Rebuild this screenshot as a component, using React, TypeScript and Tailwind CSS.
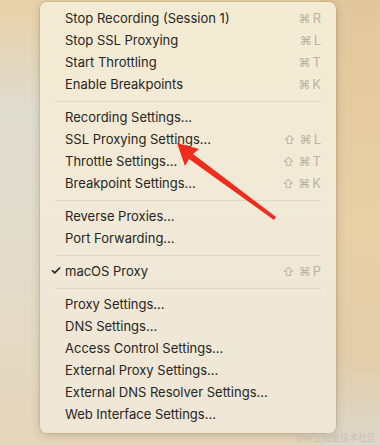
const groups: { label: string; shortcut?: string; checked?: boolean }[][] = [
  [
    { label: "Stop Recording (Session 1)", shortcut: "⌘R" },
    { label: "Stop SSL Proxying", shortcut: "⌘L" },
    { label: "Start Throttling", shortcut: "⌘T" },
    { label: "Enable Breakpoints", shortcut: "⌘K" },
  ],
  [
    { label: "Recording Settings..." },
    { label: "SSL Proxying Settings...", shortcut: "⇧⌘L" },
    { label: "Throttle Settings...", shortcut: "⇧⌘T" },
    { label: "Breakpoint Settings...", shortcut: "⇧⌘K" },
  ],
  [{ label: "Reverse Proxies..." }, { label: "Port Forwarding..." }],
  [{ label: "macOS Proxy", shortcut: "⇧⌘P", checked: true }],
  [
    { label: "Proxy Settings..." },
    { label: "DNS Settings..." },
    { label: "Access Control Settings..." },
    { label: "External Proxy Settings..." },
    { label: "External DNS Resolver Settings..." },
    { label: "Web Interface Settings..." },
  ],
];

const App = () => {
  return (
    <div className="relative w-[380px] h-[445px] overflow-hidden bg-[linear-gradient(180deg,#e9d2a8_0%,#dfdcd0_25%,#e3dccb_60%,#e6d6bb_100%)] font-['Inter','Liberation_Sans',sans-serif]">
      <div className="absolute right-0 top-0 h-full w-[60px] bg-[linear-gradient(180deg,#e3c79c_0%,#e8cfa6_50%,#e2cda9_80%,#ddd8cc_100%)]"></div>
      <div className="relative ml-[40px] mt-[2px] w-[296px] rounded-[7px] bg-[linear-gradient(180deg,#f4ebd3_0%,#f1e9d8_55%,#efe6d6_100%)] pt-[6px] pb-[7px] shadow-[0_2px_10px_rgba(80,60,30,0.25),0_0_0_0.5px_rgba(120,100,70,0.25)]">
        {groups.map((group, gi) => (
          <div key={gi}>
            {gi > 0 && <div className="mx-[15px] my-[5px] h-px bg-[#e0d9c6]"></div>}
            {group.map((item) => (
              <div key={item.label} className="flex h-[22px] items-center pl-[25px] pr-[15px] text-[13px] text-[#262522]">
                <span className="flex-1 relative">
                  {item.checked && <span className="absolute -left-[15px] top-[-1px] text-[13px] font-semibold">✓</span>}
                  {item.label}
                </span>
                {item.shortcut && (
                  <span className="flex items-center gap-[2px] text-[13px] text-[#b9b2a2]">
                    {item.shortcut.split("").map((c, i) => (
                      <span key={i} className={c === "⇧" ? "mr-[2px] text-[12px]" : c === "⌘" ? "text-[12px]" : ""}>{c}</span>
                    ))}
                  </span>
                )}
              </div>
            ))}
          </div>
        ))}
      </div>
      <svg className="absolute left-0 top-0" width="380" height="445" viewBox="0 0 380 445">
        <path d="M177 143 L199 149 L193 154 L276 217 L274 220 L189 159 L185 166 Z" fill="#f02d1c" />
      </svg>
      <div className="absolute right-[4px] bottom-[1px] text-[9px] text-[#c9c1b3] font-['Noto_Sans_CJK_SC',sans-serif]">@稀土掘金技术社区</div>
    </div>
  );
};

export default App;
